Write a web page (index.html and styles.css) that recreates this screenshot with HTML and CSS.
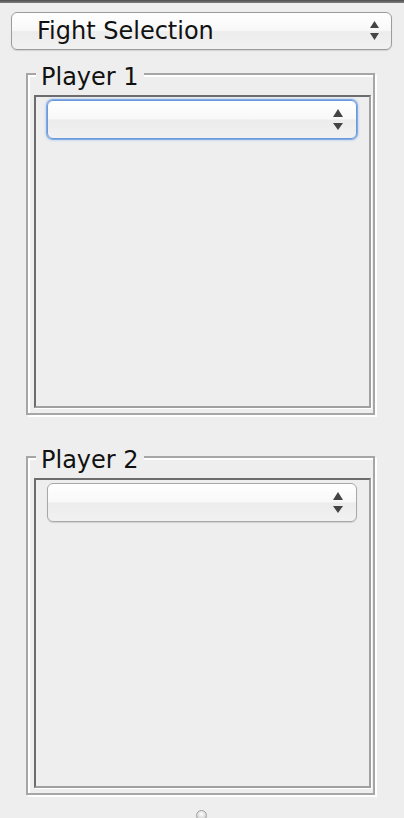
FILE: index.html
```html
<!DOCTYPE html>
<html>
<head>
<meta charset="utf-8">
<link rel="stylesheet" href="styles.css">
</head>
<body>
<div class="topbar"></div>
<div class="panel">
  <div class="combo combo-main">
    <span class="combo-label">Fight Selection</span>
    <svg class="arrows" width="9" height="20" viewBox="0 0 9 20"><polygon points="4.5,0 9,7 0,7"/><polygon points="0,12 9,12 4.5,19"/></svg>
  </div>
  <fieldset class="group">
    <legend class="group-title">Player 1</legend>
    <div class="list">
      <div class="combo combo-small focused">
        <span class="combo-label"></span>
        <svg class="arrows" width="10" height="22" viewBox="0 0 10 22"><polygon points="5,0 10,8 0,8"/><polygon points="0,14 10,14 5,21"/></svg>
      </div>
    </div>
  </fieldset>
  <fieldset class="group group-2">
    <legend class="group-title">Player 2</legend>
    <div class="list">
      <div class="combo combo-small">
        <span class="combo-label"></span>
        <svg class="arrows" width="10" height="22" viewBox="0 0 10 22"><polygon points="5,0 10,8 0,8"/><polygon points="0,14 10,14 5,21"/></svg>
      </div>
    </div>
  </fieldset>
  <div class="grip"></div>
</div>
</body>
</html>
```
FILE: styles.css
```css
html, body {
  margin: 0;
  height: 100%;
}
body {
  background: #eeeeee;
  font-family: "DejaVu Sans", "Lucida Grande", sans-serif;
  color: #111;
  overflow: hidden;
}
.topbar {
  height: 3px;
  background: linear-gradient(#4e4e4e, #808080);
}
.panel {
  padding: 9px 12px 0 11px;
}
.combo {
  box-sizing: border-box;
  display: flex;
  align-items: center;
  justify-content: space-between;
  border: 1px solid #9c9c9c;
  border-radius: 6px;
  background: linear-gradient(#ffffff 0%, #f8f8f8 48%, #ececec 52%, #f1f1f1 100%);
  box-shadow: 0 1px 1px rgba(0, 0, 0, 0.12);
}
.combo-main {
  height: 38px;
  padding: 0 12px 0 25px;
}
.combo-label {
  font-size: 24px;
  line-height: 24px;
}
.arrows polygon {
  fill: #444;
}
.group {
  box-sizing: border-box;
  margin: 7px 17px 0 15px;
  padding: 4px 0 5px 6px;
  border: 2px solid #a6a6a6;
  box-shadow: 2px 2px 0 #fff, inset 2px 2px 0 #fff;
  min-width: 0;
}
.group-2 {
  margin-top: 25px;
}
.group-title {
  font-size: 24px;
  line-height: 28px;
  padding: 6px 5px 0;
  margin-left: 2px;
  background: #eeeeee;
}
.list {
  box-sizing: border-box;
  height: 313px;
  margin-right: 2px;
  border: 2px solid;
  border-color: #6c6c6c #a0a0a0 #a0a0a0 #6c6c6c;
  box-shadow: 1px 1px 0 #fff;
  padding: 3px 12px 0 11px;
}
.group-2 .list {
  height: 310px;
}
.combo-small {
  height: 39px;
  padding: 0 13px 0 10px;
  border-color: #a8a8a8;
}
.combo-small.focused {
  border-color: #6a9ade;
  box-shadow: 0 0 0 1px rgba(106, 154, 222, 0.75), 0 0 2px 2px rgba(140, 180, 235, 0.35);
}
.grip {
  box-sizing: border-box;
  width: 11px;
  height: 11px;
  margin: 15px auto 0;
  border: 1px solid #a0a0a0;
  border-radius: 50%;
  background: radial-gradient(circle at 50% 35%, #ffffff, #bdbdbd);
}
```
